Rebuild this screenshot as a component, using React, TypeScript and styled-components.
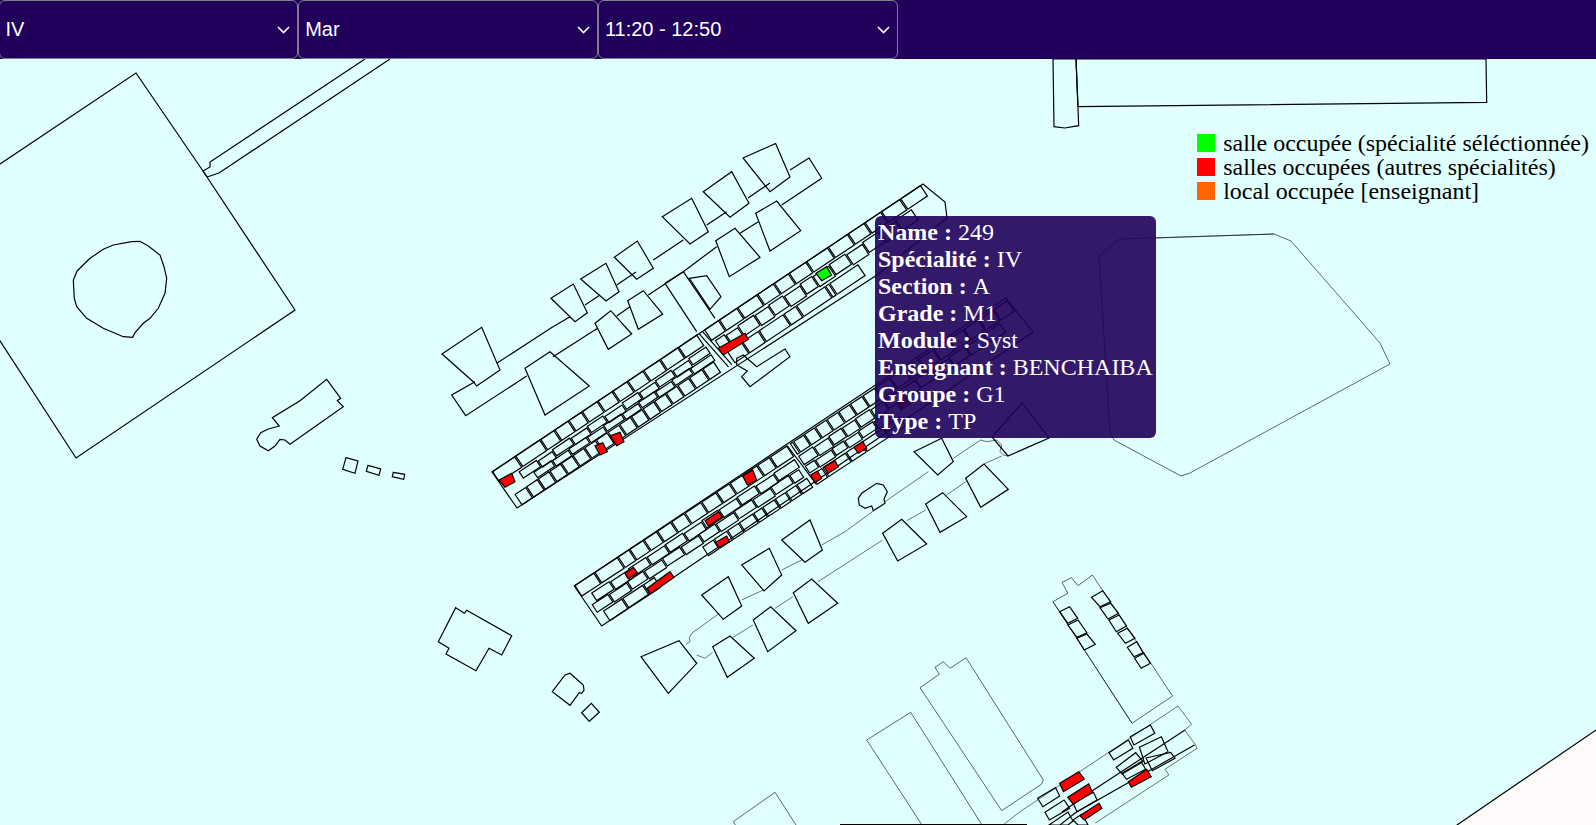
import React from "react";
import styled, { createGlobalStyle } from "styled-components";

const GlobalStyle = createGlobalStyle`
  html, body {
    margin: 0;
    padding: 0;
    background: #e0ffff;
    overflow: hidden;
  }
`;

const Page = styled.div`
  display: flex;
  flex-direction: column;
  width: 1596px;
  height: 825px;
`;

const Header = styled.div`
  display: flex;
  flex: 0 0 59px;
  background: #20005a;
`;

const SelectBox = styled.div`
  display: flex;
  align-items: center;
  justify-content: space-between;
  box-sizing: border-box;
  width: 299.7px;
  padding: 0 7px 0 6px;
  border: 1px solid #7d7d8c;
  border-radius: 6px;
  color: #fff;
  font-family: "Liberation Sans", Arial, sans-serif;
  font-size: 20px;

  &:first-child {
    margin-left: -1.5px;
  }
`;

const MapArea = styled.div`
  position: relative;
  flex: 1;
  overflow: hidden;
`;

const MapSvg = styled.svg`
  display: block;
  width: 1596px;
  height: 766px;
`;

const Shape = styled.polygon<{ $thin?: boolean; $fill?: string }>`
  fill: ${(p) => p.$fill || "none"};
  stroke: #000;
  stroke-width: ${(p) => (p.$thin ? 0.6 : 1.2)};
`;

const Wire = styled.polyline<{ $thin?: boolean }>`
  fill: none;
  stroke: #000;
  stroke-width: ${(p) => (p.$thin ? 0.55 : 1.2)};
`;

const Legend = styled.div`
  position: absolute;
  top: 72px;
  right: 7px;
  display: flex;
  flex-direction: column;
  font-family: "Liberation Serif", "Times New Roman", serif;
  font-size: 24px;
  color: #000;
`;

const LegendRow = styled.div`
  display: flex;
  align-items: center;
  gap: 8px;
  height: 24px;
  white-space: nowrap;
`;

const Swatch = styled.span<{ $color: string }>`
  flex: 0 0 18px;
  height: 18px;
  background: ${(p) => p.$color};
`;

const Tooltip = styled.div`
  position: absolute;
  top: 157px;
  left: 875px;
  box-sizing: border-box;
  width: 281px;
  height: 222px;
  padding: 3px;
  border-radius: 6px;
  background: rgba(32, 0, 90, 0.9);
  color: #fff;
  font-family: "Liberation Serif", "Times New Roman", serif;
  font-size: 24px;
  line-height: 27px;
  white-space: nowrap;
`;

const TipLabel = styled.b`
  font-weight: 700;
`;

type Pt = [number, number];
type Frame = { o: Pt; a: Pt; b: Pt };

const toPoints = (flat: number[]) => {
  const out: string[] = [];
  for (let i = 0; i < flat.length; i += 2) out.push(`${flat[i]},${flat[i + 1]}`);
  return out.join(" ");
};

const at = (f: Frame, u: number, v: number): string =>
  `${f.o[0] + u * f.a[0] + v * f.b[0]},${f.o[1] + u * f.a[1] + v * f.b[1]}`;

const room = (f: Frame, u0: number, u1: number, v0: number, v1: number) =>
  [at(f, u0, v0), at(f, u1, v0), at(f, u1, v1), at(f, u0, v1)].join(" ");

// one row of rooms: each pair of edges is a room, with a small wall gap
const roomRow = (f: Frame, edges: number[], v0: number, v1: number, stagger: number[] = [0]) =>
  edges.slice(0, -1).map((e, i) => {
    const s = stagger[i % stagger.length];
    return room(f, e + 0.7, edges[i + 1] - 0.7, v0 + s, v1 + s);
  });

const stripA: Frame = { o: [492, 472], a: [0.8315, -0.5556], b: [0.5556, 0.8315] };
const stripB: Frame = { o: [574.3, 586], a: [0.8355, -0.55], b: [0.55, 0.8355] };

const stripARooms = [
  ...roomRow(stripA, [0, 28, 58, 75, 92, 108, 127, 145, 163, 182, 202, 224, 247], 0, 12.5),
  ...roomRow(stripA, [255, 273, 295, 319, 339, 357, 378, 404, 428, 448, 468, 491, 516], 0, 12.5),
  ...roomRow(stripA, [22, 44, 62, 84, 104, 124, 146, 166, 186, 206, 226, 248], 15, 22.5, [0, 1.5, 0, 1]),
  ...roomRow(stripA, [34, 56, 76, 98, 118, 140, 160, 180, 200, 222, 248], 23.5, 30, [0, 0.8]),
  ...roomRow(stripA, [258, 270, 285, 305, 322, 340, 360, 375, 395, 415, 435, 455, 475, 495], 15, 27, [0, 1.5, 0, 1]),
  ...roomRow(stripA, [6, 20, 34, 48, 62, 76, 90, 104, 118, 132, 146, 160, 174, 188, 202, 216, 232, 246], 31.5, 44),
  ...roomRow(stripA, [262, 280, 300, 330, 345, 380, 385, 420], 31, 44),
];

const stripBRooms = [
  ...roomRow(stripB, [0, 24, 52, 66, 83, 99, 116, 132, 152, 170, 186, 202, 219, 234, 255], 0, 12.5),
  ...roomRow(stripB, [258, 262, 275, 288, 302, 316, 330, 345, 360, 378, 395, 412, 430, 448, 466, 484, 502, 519], 0, 12.5),
  ...roomRow(stripB, [10, 32, 54, 76, 98, 120, 142, 162, 184, 206, 228, 254], 15.5, 24.5, [0, 1, 0, 0.5]),
  ...roomRow(stripB, [4, 24, 46, 66, 88, 110, 132, 152, 174, 196, 218, 240, 252], 25.5, 34.5, [0, 0.8]),
  ...roomRow(stripB, [258, 276, 294, 310, 326, 344, 360, 378, 398, 418, 438, 458, 480, 500], 15, 25, [0, 1, 0, 0.5]),
  ...roomRow(stripB, [258, 270, 290, 305, 322, 340, 356], 27, 35, [0, 0.8]),
  ...roomRow(stripB, [10, 33, 58, 72], 37, 48.5),
  ...roomRow(stripB, [128, 142, 158, 172, 189, 200, 215, 228, 241, 254], 38, 48.5),
  ...roomRow(stripB, [258, 272, 300, 318, 345, 365], 38, 48.5),
];

const buildings: number[][] = [
  [-80, 217.5, 136, 73, 203, 171, 295, 310, 76, 458],
  [77.3, 270.7, 90, 258.3, 103.3, 249.3, 113.3, 245, 131.7, 241.7, 140, 241.3, 148.3, 246, 160, 255, 164, 266.7, 166.7, 278.3, 165, 293.3, 158.3, 308.3, 150, 318.3, 143.3, 323.3, 135, 332.7, 132.7, 337.3, 123.3, 336.7, 103.3, 328.3, 86.7, 318.3, 76.7, 306.7, 74.3, 298.3, 73.3, 280],
  // wing above the first strip
  [551, 298.3, 573.3, 284, 587.3, 312.7, 575, 321.7],
  [580.7, 279, 606, 263.3, 619, 291.7, 606, 301],
  [614.3, 257.3, 637.3, 241, 653.3, 268.3, 636.7, 279.3],
  [662.3, 216.7, 691.7, 198.3, 708.3, 231.7, 690, 244],
  [703.3, 191.7, 731.7, 171.7, 749, 203.3, 730, 217.3],
  [743, 158, 775.6, 143.5, 790, 177, 770, 191.7],
  [442, 354, 481.7, 327.3, 500, 370, 476.7, 386, 473.3, 381.7],
  [525, 368.3, 550, 351.7, 589.3, 386, 545, 415],
  [595, 323.3, 610.7, 310.7, 631.7, 334, 608.3, 349.3],
  [627.7, 300.7, 643.3, 290.7, 662.7, 314, 638.3, 329.3],
  [689.3, 278.3, 706.7, 275.7, 721, 296.7, 710, 309.3],
  [715.7, 240.7, 735, 228.3, 760, 257.3, 729.3, 276.7],
  [755.7, 213.3, 776.7, 201, 800.7, 230.7, 770, 251],
  [736.7, 358.3, 743.3, 355, 756.7, 366.7, 785, 349, 790, 356.7, 750, 386.7, 741.7, 376.7, 747.3, 371, 736.7, 365],
  // left side small buildings
  [326.7, 379.3, 340.7, 398.3, 337.3, 400.7, 343.3, 406.7, 290, 444.3, 285, 440, 280, 439.3, 275, 446, 268.3, 450.7, 260, 446, 256.7, 439.3, 260.7, 432.7, 268.3, 429, 279.3, 426, 272.3, 417.7, 300, 400.7],
  [346, 457.7, 358, 461, 355, 473.3, 342.7, 469.3],
  [368, 465.3, 380.7, 469, 379, 475.3, 366.3, 471.3],
  [393.3, 472.3, 404.7, 474.3, 403.7, 479.3, 392.3, 476.7],
  [455.7, 607.7, 464.3, 613.3, 466.7, 610.3, 511.7, 635.7, 501.7, 655, 489, 648.3, 476, 670.7, 446, 654, 449, 648.3, 438.3, 641.7],
  [552.3, 691.7, 565, 675, 570, 673.3, 583.3, 685, 584, 690, 581.7, 693.3, 579.3, 692.7, 570, 705.3],
  [581.7, 712.7, 591.3, 703.3, 599.3, 712.3, 589.3, 721.3],
  // wing below the second strip
  [641, 656.7, 679, 640.7, 696.7, 663.3, 668.3, 693.3],
  [712.7, 646.7, 730, 636, 754.3, 658.3, 727.3, 677.3],
  [753.3, 620, 770.7, 606.7, 796, 630.7, 767.7, 651.7],
  [793.3, 592.7, 811.7, 579, 837.7, 603.3, 808.3, 623.3],
  [701.7, 595, 728.3, 576.7, 741.7, 606, 723.3, 619.3],
  [741.7, 565, 769.3, 548.3, 781.7, 575, 764, 591],
  [781.7, 540, 810, 520, 822.3, 550, 805, 562.3],
  [882.7, 533.3, 901.7, 519.3, 926.7, 544, 897.7, 561],
  [925.7, 504, 942.7, 492.7, 966.7, 516.7, 940, 532.3],
  [965.7, 478.3, 984, 464, 1008.3, 489.3, 980.7, 507.3],
  [914, 451.7, 941.7, 438.3, 953.3, 461.7, 937.7, 475],
  [858.3, 498.3, 861.7, 493.3, 876.7, 483.3, 883.3, 485, 887.3, 491.7, 884, 499, 885, 503.3, 873.3, 510.7, 871.7, 506, 865, 508.3, 859.3, 505],
  [992, 437, 1022, 403, 1049, 438, 1008, 456],
  // top blocks
  [1053, 59, 1054, 126.7, 1064.6, 128, 1078.7, 125.7, 1076, 59],
  [1076, 59, 1078, 106.7, 1486.7, 102.3, 1486, 59],
  // rooms of the lower right building
  [1059.7, 611.7, 1069.6, 606.7, 1077.7, 618.3, 1067.8, 623.3],
  [1067.8, 625, 1078, 620, 1086.9, 632.7, 1077, 637.3],
  [1077, 638.3, 1086.9, 634, 1095.3, 644.3, 1084.3, 650],
  [1091.6, 597.3, 1102.7, 590.7, 1110.7, 601.7, 1100, 606.7],
  [1100, 607.7, 1110.7, 603.3, 1118.5, 613.3, 1108, 619],
  [1108.9, 620, 1119.2, 615, 1126.5, 626, 1116.3, 631.7],
  [1117.7, 633.3, 1127.3, 628.3, 1135, 638.3, 1125.4, 643.3],
  [1127.3, 647.3, 1136.8, 641.7, 1143, 652.7, 1133.9, 656.7],
  [1134.6, 658.3, 1143.8, 653.3, 1150.4, 663.3, 1141.2, 668.3],
  [1108.9, 752.7, 1128.4, 740, 1132.8, 748.3, 1113.7, 760],
  [1130.2, 736.7, 1150.4, 725, 1154.8, 733.3, 1133.9, 745],
  [1116.3, 767.3, 1135.7, 752.7, 1143, 761.7, 1122.1, 774],
  [1122.1, 773.3, 1141.2, 761.7, 1145.6, 769.3, 1126.5, 779.3],
  [1139.4, 747.3, 1161.4, 736.7, 1168, 751.7, 1144.9, 764],
  [1146, 758, 1170.6, 752.3, 1175, 758.3, 1152.3, 770.7],
  [1037.6, 798.3, 1055.6, 787.7, 1059.7, 796, 1042.8, 806.7],
  [1045, 812.3, 1064.1, 800, 1069.6, 808.3, 1049.4, 820],
  [1073.3, 803.3, 1093.5, 792.3, 1097.1, 800, 1076.9, 811.7],
  [1049, 825, 1068, 812, 1073, 821, 1068, 825],
  [1073, 820, 1082, 814, 1088, 825, 1078, 825],
];

const thinBuildings: number[][] = [
  [1119, 239, 1099, 256, 1110, 433, 1114, 440, 1181, 476, 1190, 473, 1390, 364, 1380, 343, 1291, 241, 1274, 234],
  [1053, 601.7, 1067.8, 593.3, 1062, 582.3, 1071.4, 577.7, 1078, 585.7, 1092.4, 575, 1172.5, 696, 1132, 723.3],
  [920, 687.7, 939.3, 674.3, 935, 667.3, 943.3, 661.7, 950, 668.3, 966, 657.7, 1043.3, 780, 1041.7, 784, 1001.7, 810.7],
  [866.7, 740, 910.7, 712.3, 981.7, 824.5, 921.7, 824.5],
  [733.3, 821.7, 775, 792.3, 796.7, 826, 736, 826],
];

const wires: number[][] = [
  [203, 171, 210, 167, 210, 162, 365, 59],
  [207, 177, 219, 173, 390, 59],
  [203, 171, 207, 177],
  // spines of the upper wing
  [496.7, 363.3, 551, 328, 570, 316.7],
  [585, 305, 600, 295],
  [616.7, 285, 636, 272],
  [653.3, 260, 683.3, 240],
  [706.7, 225, 726.7, 211.7],
  [748, 198, 770, 183],
  [475, 381.7, 451.7, 395, 465.7, 415.7, 526.7, 376],
  [553, 356.7, 598, 328],
  [616.7, 316, 630, 306.7],
  [648.3, 295, 683.3, 271.7, 716.7, 246.7],
  [740, 233.3, 758.3, 221.7],
  [781.7, 205, 821.7, 178.3, 809, 158, 790, 170],
  [665, 283.3, 696.7, 331.7],
  [683.3, 271.7, 715, 318.3],
  [665, 283.3, 683.3, 271.7],
  // lower right building lines
  [1185, 730, 1093.5, 790, 1062, 812],
  [1194.5, 745, 1075, 813, 1060, 825],
  // bottom dark line
  [840, 824.5, 1027, 824.5],
];

const thinWires: number[][] = [
  [821.7, 545, 845, 531.7, 873.3, 511],
  [885, 501.7, 928.3, 471.7],
  [953.3, 458.3, 980.7, 440, 986.7, 441.7, 996.7, 440, 1001.7, 445, 1000, 451.7, 1003.3, 455, 1008, 456],
  [741.7, 600, 763.3, 590],
  [781.7, 570, 801.7, 560],
  [719.3, 613.3, 691.7, 633.3, 689.3, 637.3, 690, 641.7, 686, 644.3],
  [696.7, 655, 705, 658.3, 712.7, 652.3],
  [733, 637.3, 753, 625],
  [775, 608.3, 793, 596.7],
  [818, 581.7, 882.7, 540],
  [906.7, 520.7, 925.7, 510],
  [946.7, 495, 965.7, 481.7],
  [984, 464, 1001.7, 456],
  [1156, 238, 1274, 234],
  [1053, 601.7, 1132, 723.3],
  [1003, 825, 1020, 811.7, 1178, 706, 1191.6, 724.3, 1184.6, 730, 1195.6, 745, 1197, 748.3, 1165, 769.3, 1168.8, 775, 1095.3, 823],
];

const redRooms: number[][] = [
  [499, 480, 511.7, 473.3, 515, 481.7, 505, 487.3],
  [595, 445.7, 602.7, 442.7, 607.3, 451.7, 600, 455],
  [610, 435.7, 620, 432.3, 624, 441.7, 616.7, 445.7],
  [718.3, 348.3, 745, 333.3, 748.3, 339.3, 723.3, 355],
  [742.7, 476, 752.7, 470, 756.7, 480, 747.3, 485],
  [705, 520.7, 718.3, 511.7, 722.3, 516.7, 708.3, 526],
  [625, 573.3, 633.3, 567.3, 637.3, 572.7, 628.3, 579],
  [647.3, 588.3, 670, 571.7, 674, 577.3, 650, 594],
  [715.7, 542.3, 726.7, 536, 729.3, 541.7, 718.3, 547.7],
  [810.7, 475, 817.3, 471, 821.7, 478.3, 815, 482.7],
  [824.3, 466.7, 835, 460.7, 838.3, 466.7, 828.3, 473.3],
  [854, 447.3, 862.7, 441.7, 866.7, 448.3, 858.3, 453.3],
  [897, 403, 906, 397, 910, 404, 901, 410],
  [1128.4, 781.7, 1146.7, 769.3, 1151.2, 776.7, 1131.3, 787.3],
  [1059.7, 783.3, 1078.8, 771.7, 1084.3, 779, 1063.4, 791.7],
  [1067.8, 797.3, 1088.7, 784, 1092.4, 792.3, 1073.3, 804.3],
  [1079.9, 815.7, 1099, 803.3, 1101.9, 808.3, 1084.3, 820],
];

const selects = ["IV", "Mar", "11:20 - 12:50"];

const legendItems = [
  { color: "#00ff00", text: "salle occupée (spécialité séléctionnée)" },
  { color: "#ff0000", text: "salles occupées (autres spécialités)" },
  { color: "#ff6600", text: "local occupée [enseignant]" },
];

const roomInfo = [
  ["Name", "249"],
  ["Spécialité", "IV"],
  ["Section", "A"],
  ["Grade", "M1"],
  ["Module", "Syst"],
  ["Enseignant", "BENCHAIBA"],
  ["Groupe", "G1"],
  ["Type", "TP"],
];

function Chevron() {
  return (
    <svg width="13" height="8" viewBox="0 0 13 8" fill="none" stroke="#fff" strokeWidth="1.6">
      <path d="M1 1l5.5 5.5L12 1" />
    </svg>
  );
}

function CampusMap() {
  return (
    <MapSvg viewBox="0 59 1596 766">
      <Shape points="1457,825 1596,730 1640,730 1640,860 1457,860" $fill="#fffafa" />
      {buildings.map((b, i) => (
        <Shape key={i} points={toPoints(b)} />
      ))}
      {thinBuildings.map((b, i) => (
        <Shape key={i} points={toPoints(b)} $thin />
      ))}
      {wires.map((w, i) => (
        <Wire key={i} points={toPoints(w)} />
      ))}
      {thinWires.map((w, i) => (
        <Wire key={i} points={toPoints(w)} $thin />
      ))}
      <Shape points="492,472 923,184 945,202 947,218 877,275 517,508" />
      <Shape points="574.3,586 1006,298 1033,332 813,483 601.7,626" />
      <Wire points={`${at(stripA, 249, 0)} ${at(stripA, 255, 44)}`} />
      <Wire points={`${at(stripA, 253, 0)} ${at(stripA, 259, 44)}`} />
      <Wire points={`${at(stripB, 255, 0)} ${at(stripB, 258, 48)}`} />
      {stripARooms.map((r, i) => (
        <Shape key={i} points={r} />
      ))}
      {stripBRooms.map((r, i) => (
        <Shape key={i} points={r} />
      ))}
      {redRooms.map((r, i) => (
        <Shape key={i} points={toPoints(r)} $fill="#ff0000" />
      ))}
      <Shape points="816,273.3 826.7,266.7 831.7,275 821.7,280.7" $fill="#00ff00" />
    </MapSvg>
  );
}

export default function App() {
  return (
    <Page>
      <GlobalStyle />
      <Header>
        {selects.map((s) => (
          <SelectBox key={s}>
            {s}
            <Chevron />
          </SelectBox>
        ))}
      </Header>
      <MapArea>
        <CampusMap />
        <Legend>
          {legendItems.map((l) => (
            <LegendRow key={l.text}>
              <Swatch $color={l.color} />
              {l.text}
            </LegendRow>
          ))}
        </Legend>
        <Tooltip>
          {roomInfo.map(([k, v]) => (
            <div key={k}>
              <TipLabel>{k} : </TipLabel>
              {v}
            </div>
          ))}
        </Tooltip>
      </MapArea>
    </Page>
  );
}
